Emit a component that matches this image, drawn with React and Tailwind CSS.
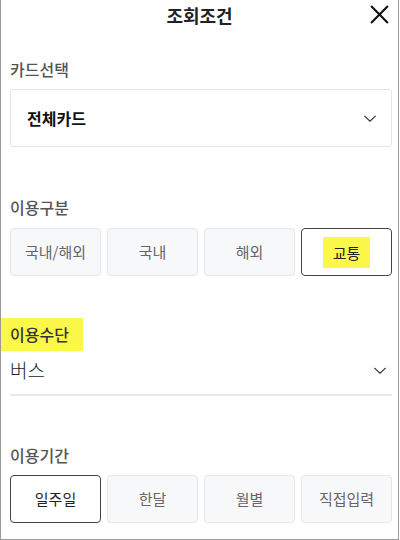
import React from "react";

const font = {
  fontFamily: '"Noto Sans CJK KR", "Noto Sans", sans-serif',
};

const Chevron = ({ className }) => (
  <svg
    viewBox="0 0 16 10"
    className={className}
    fill="none"
    stroke="#333"
    strokeWidth="1.4"
  >
    <path d="M1.5 2 L8 8 L14.5 2" />
  </svg>
);

const Segment = ({ items, active, highlight }) => (
  <div className="grid grid-cols-4 gap-[6px]">
    {items.map((item, i) =>
      i === active ? (
        <button
          key={item}
          className="h-[48px] rounded-[4px] border border-[#444] bg-white text-[15px] text-[#222] flex items-center justify-center"
        >
          {highlight ? (
            <span className="bg-[#fbf84a] px-[10px] py-[5px] leading-[21px]">
              {item}
            </span>
          ) : (
            item
          )}
        </button>
      ) : (
        <button
          key={item}
          className="h-[48px] rounded-[4px] border border-[#e6e7e9] bg-[#f7f8f9] text-[15px] text-[#666] flex items-center justify-center"
        >
          {item}
        </button>
      )
    )}
  </div>
);

const App = () => {
  return (
    <div
      style={font}
      className="w-[399px] h-[540px] bg-white border-l border-r border-b border-[#9a9a9a] overflow-hidden"
    >
      <header className="relative h-[30px] flex items-center justify-center">
        <h1 className="text-[18px] font-bold text-[#222]">조회조건</h1>
        <button className="absolute right-[8px] top-[4px]">
          <svg viewBox="0 0 20 20" className="w-[21px] h-[21px]" stroke="#111" strokeWidth="2">
            <path d="M2 2 L18 18 M18 2 L2 18" />
          </svg>
        </button>
      </header>

      <div className="pl-[9px] pr-[6px]">
        <p className="mt-[27px] text-[16px] font-medium text-[#555]">카드선택</p>
        <div className="mt-[8px] h-[58px] rounded-[3px] border border-[#e3e4e6] flex items-center justify-between pl-[16px] pr-[14px]">
          <span className="text-[16px] font-bold text-[#111]">전체카드</span>
          <Chevron className="w-[14px] h-[9px]" />
        </div>

        <p className="mt-[48px] text-[16px] font-medium text-[#555]">이용구분</p>
        <div className="mt-[9px]">
          <Segment items={["국내/해외", "국내", "해외", "교통"]} active={3} highlight />
        </div>
      </div>

      <div className="mt-[42px]">
        <span className="inline-block bg-[#fbf84a] pl-[9px] pr-[14px] py-[4px] text-[16px] font-medium text-[#333] leading-[25px]">
          이용수단
        </span>
      </div>
      <div className="pl-[9px] pr-[6px]">
        <div className="mt-[4px] flex items-center justify-between pb-[9px] border-b-2 border-[#e8e9eb]">
          <span className="text-[19px] font-light text-[#222] leading-[30px]">버스</span>
          <Chevron className="w-[14px] h-[9px] mr-[5px]" />
        </div>

        <p className="mt-[47px] text-[16px] font-medium text-[#555]">이용기간</p>
        <div className="mt-[8px]">
          <Segment items={["일주일", "한달", "월별", "직접입력"]} active={0} />
        </div>
      </div>
    </div>
  );
};

export default App;
